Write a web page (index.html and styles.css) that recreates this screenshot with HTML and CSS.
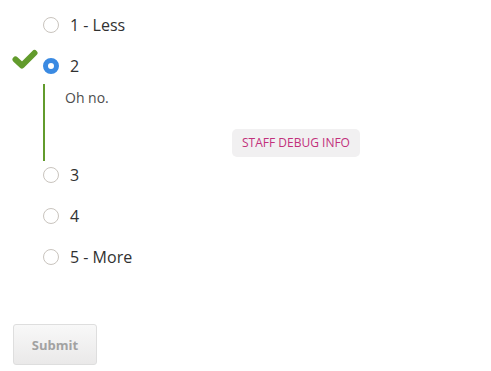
FILE: index.html
```html
<!DOCTYPE html>
<html lang="en">
<head>
    <meta charset="UTF-8">
    <title>Problem</title>
    <link rel="stylesheet" href="styles.css">
</head>
<body>
    <div class="problem">
        <div class="choices">
            <label class="choice">
                <input type="radio" name="q1" value="1">
                <span>1 - Less</span>
            </label>
            <label class="choice correct">
                <svg class="check" width="26" height="21" viewBox="0 0 26 21">
                    <polyline points="3.5,10.5 10,16.5 22.5,4" fill="none" stroke="#629b2c" stroke-width="6" stroke-linecap="round" stroke-linejoin="round"/>
                </svg>
                <input type="radio" name="q1" value="2" checked>
                <span>2</span>
            </label>
            <div class="feedback">
                <p>Oh no.</p>
                <div class="debug-row">
                    <button class="staff-debug">Staff Debug Info</button>
                </div>
            </div>
            <label class="choice">
                <input type="radio" name="q1" value="3">
                <span>3</span>
            </label>
            <label class="choice">
                <input type="radio" name="q1" value="4">
                <span>4</span>
            </label>
            <label class="choice">
                <input type="radio" name="q1" value="5">
                <span>5 - More</span>
            </label>
        </div>

        <button class="submit">Submit</button>
    </div>
</body>
</html>
```

FILE: styles.css
```css
* {
    margin: 0;
    padding: 0;
    box-sizing: border-box;
}

body {
    background: #fff;
    font-family: "Open Sans", sans-serif;
    color: #313131;
}

.problem {
    padding: 4px 13px 0 13px;
}

.choices {
    padding-left: 30px;
}

.choice {
    position: relative;
    display: flex;
    align-items: center;
    gap: 11px;
    height: 41px;
    font-size: 16px;
}

.choice input {
    appearance: none;
    -webkit-appearance: none;
    width: 16px;
    height: 16px;
    border: 1px solid #c9c4be;
    border-radius: 50%;
    background: #fff;
    flex-shrink: 0;
}

.choice input:checked {
    border: 5px solid #3a8ae2;
}

.check {
    position: absolute;
    left: -31px;
    top: 4px;
}

.feedback {
    margin-top: -2px;
    margin-bottom: -7px;
    border-left: 2px solid #629b2c;
    padding: 4px 0 4px 20px;
}

.feedback p {
    font-size: 14px;
    line-height: 20px;
    color: #4d4d4d;
}

.debug-row {
    margin-top: 21px;
    padding-left: 167px;
}

.staff-debug {
    font-family: "Open Sans", sans-serif;
    font-size: 12px;
    line-height: 16px;
    padding: 6px 0;
    width: 128px;
    text-transform: uppercase;
    color: #c2307c;
    background: #f1f0f1;
    border: none;
    border-radius: 5px;
}

.submit {
    margin-top: 47px;
    width: 84px;
    height: 41px;
    font-family: "Open Sans", sans-serif;
    font-size: 13px;
    font-weight: bold;
    color: #a2a2a2;
    background: linear-gradient(#f8f8f8, #eae9e9);
    border: 1px solid #dedede;
    border-radius: 3px;
}
```
